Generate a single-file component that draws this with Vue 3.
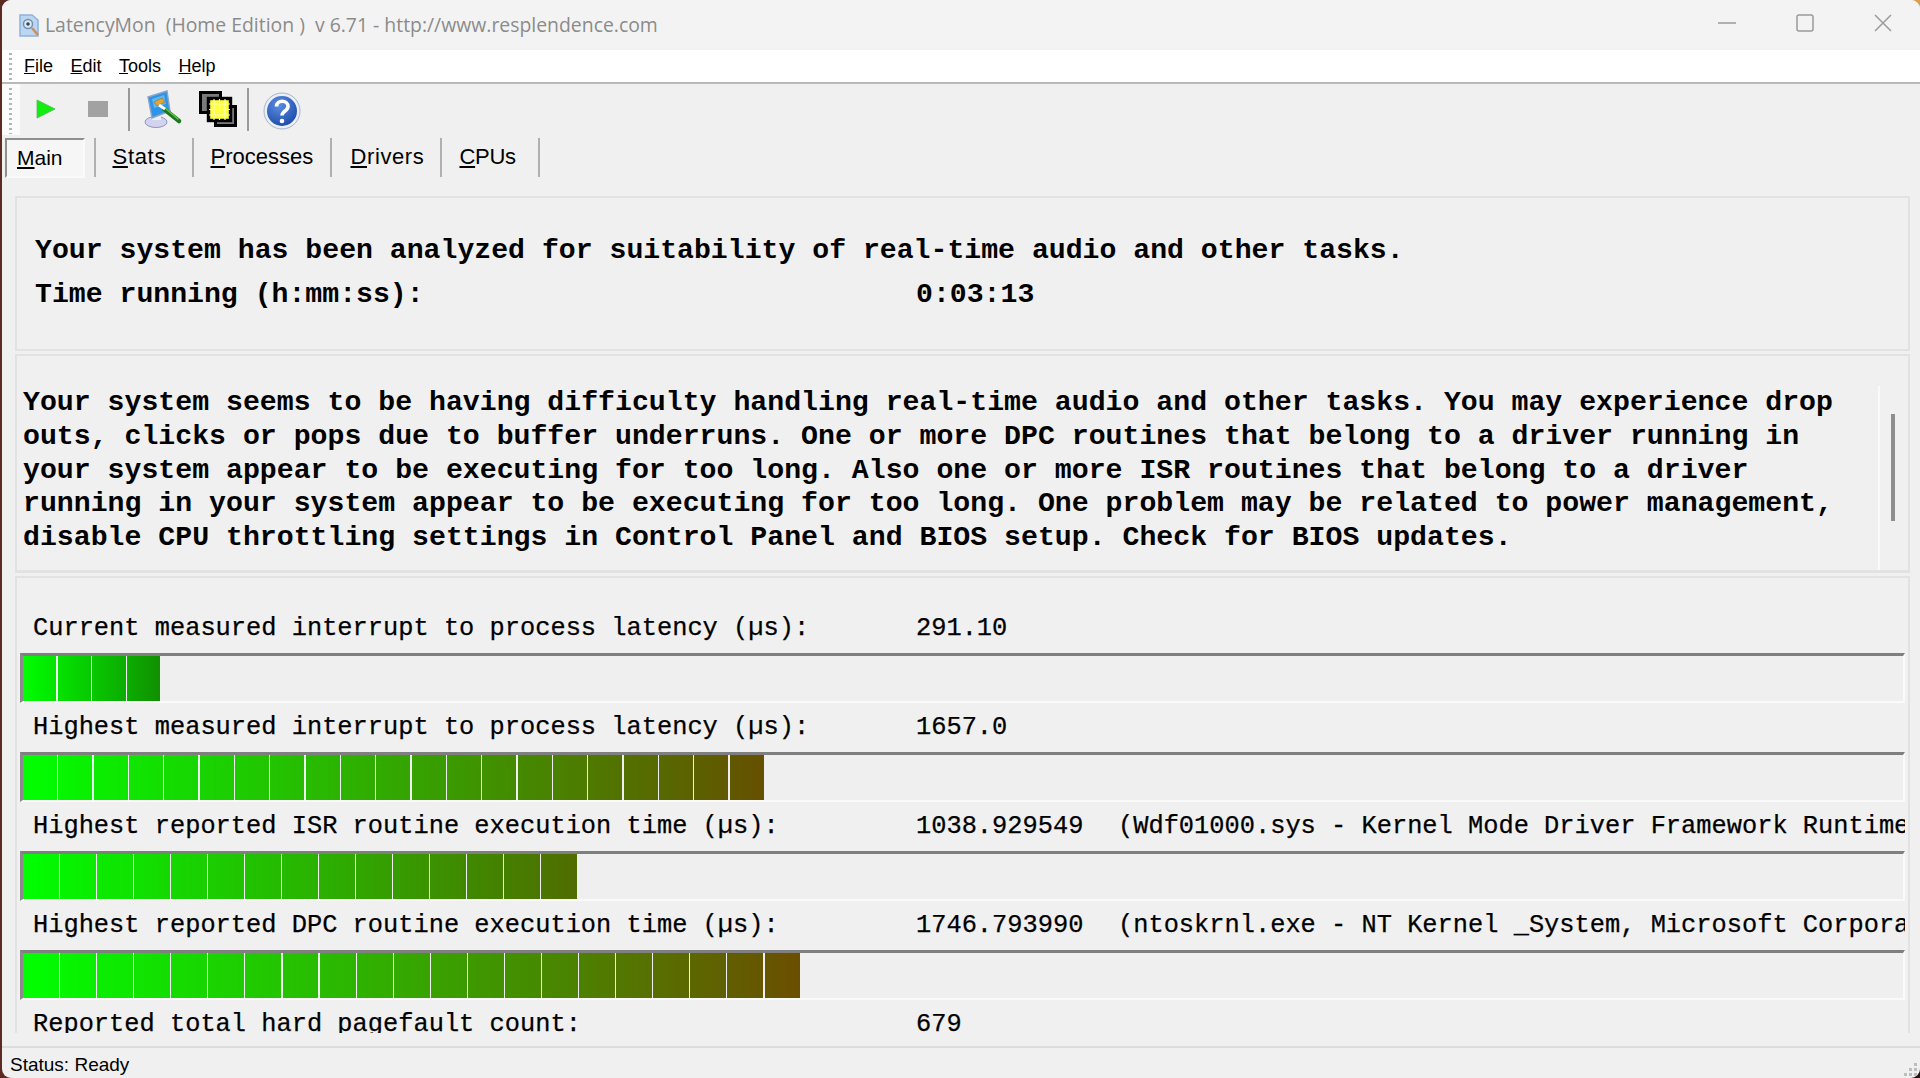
<script setup>
const menus = [['F', 'ile'], ['E', 'dit'], ['T', 'ools'], ['H', 'elp']]
const tabs = [
  { key: 'main', u: 'M', rest: 'ain' },
  { key: 'stats', u: 'S', rest: 'tats' },
  { key: 'processes', u: 'P', rest: 'rocesses' },
  { key: 'drivers', u: 'D', rest: 'rivers' },
  { key: 'cpus', u: 'C', rest: 'PUs' }
]
const advice = [
  'Your system seems to be having difficulty handling real-time audio and other tasks. You may experience drop',
  'outs, clicks or pops due to buffer underruns. One or more DPC routines that belong to a driver running in',
  'your system appear to be executing for too long. Also one or more ISR routines that belong to a driver',
  'running in your system appear to be executing for too long. One problem may be related to power management,',
  'disable CPU throttling settings in Control Panel and BIOS setup. Check for BIOS updates.'
]
function segments(count, pitch, end) {
  const out = []
  for (let i = 0; i < count; i++) {
    const mix = t => `rgb(${Math.round(end[0] * t)},${Math.round(255 + (end[1] - 255) * t)},0)`
    out.push({
      width: pitch - 1.2 + 'px',
      background: `linear-gradient(to right, ${mix(i / count)}, ${mix((i + 1) / count)})`
    })
  }
  return out
}
const rows = [
  { label: 'Current measured interrupt to process latency (µs):', value: '291.10', detail: '', segs: segments(4, 34.6, [16, 144]) },
  { label: 'Highest measured interrupt to process latency (µs):', value: '1657.0', detail: '', segs: segments(21, 35.35, [102, 80]) },
  { label: 'Highest reported ISR routine execution time (µs):', value: '1038.929549', detail: '(Wdf01000.sys - Kernel Mode Driver Framework Runtime', segs: segments(15, 37, [80, 108]) },
  { label: 'Highest reported DPC routine execution time (µs):', value: '1746.793990', detail: '(ntoskrnl.exe - NT Kernel _System, Microsoft Corpora', segs: segments(21, 37.1, [107, 78]) },
  { label: 'Reported total hard pagefault count:', value: '679', detail: '', segs: null }
]
</script>

<template>
  <div class="window">
    <header class="titlebar">
      <svg class="app-icon" viewBox="0 0 24 26" width="24" height="26">
        <path d="M3 3h12l6 5v16H3z" fill="#bcd6f2" stroke="#8fb2da" stroke-width="1.5" />
        <circle cx="11" cy="12" r="4.5" fill="#dfeaf6" stroke="#6f8fb0" stroke-width="1.5" />
        <circle cx="11" cy="12" r="1.8" fill="#33475c" />
        <path d="M15 16l6 7" stroke="#c98f62" stroke-width="2.6" />
      </svg>
      <span class="title-text">LatencyMon&nbsp; (Home Edition )&nbsp; v 6.71 - http://www.resplendence.com</span>
      <div class="win-controls">
        <svg class="wc wc-min" viewBox="0 0 18 18" width="18" height="18"><path d="M0 9h18" stroke="#9a9a9a" stroke-width="1.5" /></svg>
        <svg class="wc wc-max" viewBox="0 0 18 18" width="18" height="18"><rect x="1" y="1" width="16" height="16" rx="2" fill="none" stroke="#9a9a9a" stroke-width="1.5" /></svg>
        <svg class="wc wc-close" viewBox="0 0 18 18" width="18" height="18"><path d="M1 1l16 16M17 1L1 17" stroke="#9a9a9a" stroke-width="1.5" /></svg>
      </div>
    </header>

    <nav class="menubar">
      <span class="grip"></span>
      <span v-for="m in menus" :key="m[0]" class="menu-item"><u>{{ m[0] }}</u>{{ m[1] }}</span>
    </nav>

    <div class="toolbar">
      <span class="grip grip-tool"></span>
      <svg class="tb-play" viewBox="0 0 20 20" width="20" height="20"><path d="M1 1l18 9-18 9z" fill="#10ef10" stroke="#5fae5f" stroke-width=".8" /></svg>
      <span class="tb-stop"></span>
      <span class="tb-sep first"></span>
      <svg class="tb-tool" viewBox="0 0 40 38" width="40" height="38">
        <ellipse cx="13" cy="32" rx="11" ry="5.500" fill="#d2d3ee" stroke="#9395bd" />
        <path d="M9 24h9v6H9z" fill="#eeeef8" />
        <path d="M5 7L24 1l3 20-18 7z" fill="#2f93e8" stroke="#8aa5c9" stroke-width="1.4" />
        <path d="M9 9l12-4 2 9-12 4z" fill="#59baf5" />
        <path d="M11 12l8-4 3 4-8 4z" fill="#e3a53a" stroke="#9c7324" stroke-width=".7" />
        <path d="M21 19l15 12" stroke="#19791c" stroke-width="4.500" stroke-linecap="round" />
        <path d="M22 18l13 11" stroke="#6fc04a" stroke-width="1.400" stroke-linecap="round" />
        <path d="M16 15l6 4" stroke="#fff" stroke-width="3" />
      </svg>
      <svg class="tb-win" viewBox="0 0 38 36" width="38" height="36">
        <rect x="1.500" y="1.500" width="20" height="20" fill="#7a7a7a" stroke="#000" stroke-width="3" />
        <rect x="16.500" y="15.500" width="20" height="19" fill="#7a7a7a" stroke="#000" stroke-width="3" />
        <rect x="9.500" y="7.500" width="22" height="22" fill="#ffff3a" stroke="#000" stroke-width="3.400" />
        <path d="M15 8v21M20.500 8v21M26 8v21M10 13h21M10 18.500h21M10 24h21" stroke="#fdfdc0" stroke-width="1.200" />
      </svg>
      <span class="tb-sep second"></span>
      <svg class="tb-help" viewBox="0 0 38 38" width="38" height="38">
        <defs>
          <radialGradient id="helpFill" cx="40%" cy="30%" r="75%">
            <stop offset="0" stop-color="#5f8fe0" />
            <stop offset="1" stop-color="#1a4aa8" />
          </radialGradient>
        </defs>
        <circle cx="19" cy="19" r="18" fill="#e9eef8" stroke="#a9b4c9" />
        <circle cx="19" cy="19" r="15" fill="url(#helpFill)" />
        <path d="M13.500 14.500c0-7 11.500-7 11.500 0 0 4.500-6 4.500-6 9" fill="none" stroke="#fff" stroke-width="3.600" />
        <circle cx="19" cy="29" r="2.300" fill="#fff" />
      </svg>
    </div>

    <div class="tabs">
      <span v-for="t in tabs" :key="t.key" class="tab" :class="'tab-' + t.key"><span class="tab-face"><u>{{ t.u }}</u>{{ t.rest }}</span></span>
    </div>

    <main class="content">
      <section class="panel panel-head">
        <div class="head-line">Your system has been analyzed for suitability of real-time audio and other tasks.</div>
        <div class="head-line time-line"><span class="time-label">Time running (h:mm:ss):</span><span>0:03:13</span></div>
      </section>

      <section class="panel panel-advice">
        <div class="advice-text">
          <div v-for="line in advice" :key="line" class="advice-line">{{ line }}</div>
        </div>
        <div class="advice-scroll"><span class="thumb"></span></div>
      </section>

      <section class="panel panel-stats">
        <div v-for="r in rows" :key="r.label" class="stat">
          <div class="stat-line">
            <span class="stat-label">{{ r.label }}</span>
            <span class="stat-value">{{ r.value }}</span>
            <span v-if="r.detail" class="stat-detail">{{ r.detail }}</span>
          </div>
          <div v-if="r.segs" class="bar">
            <span v-for="(s, i) in r.segs" :key="i" class="seg" :style="s"></span>
          </div>
        </div>
      </section>
    </main>

    <footer class="statusbar">
      <span>Status: Ready</span>
      <svg class="resize" viewBox="0 0 16 16" width="16" height="16">
        <path d="M11 2h3v3h-3zM6 7h3v3H6zM11 7h3v3h-3zM1 12h3v3H1zM6 12h3v3H6zM11 12h3v3h-3z" fill="#bdbdbd" />
      </svg>
    </footer>
  </div>
</template>

<style scoped>
.window {
  margin-left: 2px;
  width: 1918px;
  height: 1078px;
  display: flex;
  flex-direction: column;
  overflow: hidden;
  border-radius: 9px;
  background: #f0f0f0;
  font-family: "Liberation Sans", Arial, sans-serif;
  color: #000;
}
.titlebar {
  height: 50px;
  flex: none;
  background: #f3f3f3;
  display: flex;
  align-items: center;
  padding-left: 15px;
}
.app-icon { flex: none; }
.title-text {
  margin-left: 4px;
  margin-bottom: 2px;
  font-family: "Open Sans", sans-serif;
  font-size: 19.400px;
  color: #8b8b8b;
  white-space: nowrap;
}
.win-controls {
  margin-left: auto;
  display: flex;
  align-items: center;
  padding-right: 28px;
  padding-bottom: 4px;
}
.wc-max { margin-left: 60px; }
.wc-close { margin-left: 60px; }
.menubar {
  height: 31px;
  flex: none;
  background: #fff;
  border-bottom: 2px solid #b9b9b9;
  display: flex;
  align-items: center;
  position: relative;
  font-size: 18px;
  padding-left: 22px;
  padding-top: 1px;
}
.grip {
  position: absolute;
  left: 7px;
  top: 3px;
  bottom: 2px;
  width: 3px;
  background: repeating-linear-gradient(to bottom, #b5b5b5 0 2px, transparent 2px 5px);
}
.menu-item { margin-right: 17.500px; }
.toolbar {
  height: 50px;
  flex: none;
  display: flex;
  align-items: center;
  position: relative;
  padding-left: 34px;
  padding-bottom: 1px;
}
.toolbar::before {
  content: "";
  position: absolute;
  left: 0;
  top: 0;
  bottom: 0;
  width: 18px;
  background: #fbfbfb;
}
.grip-tool { z-index: 1; top: 4px; bottom: 1px; }
.tb-play { flex: none; }
.tb-stop {
  width: 20px;
  height: 16px;
  margin-left: 32px;
  background: #a2a2a2;
}
.tb-sep {
  width: 2px;
  height: 43px;
  background: #9a9a9a;
}
.tb-sep.first { margin-left: 20px; }
.tb-tool { margin-left: 13px; flex: none; }
.tb-win { margin-left: 16px; flex: none; }
.tb-sep.second { margin-left: 10px; }
.tb-help { margin-left: 14px; margin-top: 3px; flex: none; }
.tabs {
  height: 43px;
  flex: none;
  display: flex;
  align-items: stretch;
  padding-left: 3px;
  font-size: 22px;
}
.tab {
  display: flex;
  align-items: center;
  border-right: 2px solid #b0b0b0;
  margin-top: 3px;
  margin-bottom: 1px;
  line-height: 34px;
  padding-bottom: 2px;
}
.tab-face { padding-left: 17px; }
.tab-main { width: 88.500px; padding-bottom: 0; }
.tab-main .tab-face {
  width: 80px;
  height: 40px;
  box-sizing: border-box;
  padding-left: 10px;
  padding-top: 2px;
  line-height: 32px;
  font-size: 21px;
  border-style: solid;
  border-width: 2px;
  border-color: #8e8e8e #fafafa #fafafa #8e8e8e;
  background: #f6f6f6;
}
.tab-stats { width: 96px; }
.tab-stats .tab-face { letter-spacing: 0.7px; }
.tab-processes { width: 136px; }
.tab-drivers { width: 108px; }
.tab-drivers .tab-face { padding-left: 19px; letter-spacing: 0.6px; }
.tab-cpus { width: 96px; }
.tab-cpus .tab-face { padding-left: 18px; letter-spacing: -0.3px; }
.content {
  flex: 1;
  min-height: 0;
  display: flex;
  flex-direction: column;
  gap: 2px;
  padding: 18px 10px 0 13px;
  font-family: "Liberation Mono", "Courier New", monospace;
}
.panel {
  box-sizing: border-box;
  border: 2px solid #e2e2e2;
  flex: none;
  overflow: hidden;
}
.panel-head {
  height: 155px;
  padding: 31px 0 0 18px;
  font-size: 28.160px;
  font-weight: 700;
  white-space: pre;
}
.head-line {
  height: 44px;
  line-height: 44px;
}
.time-label { display: inline-block; width: 881px; }
.panel-advice {
  height: 219px;
  display: flex;
  padding: 30px 0 0 6px;
  margin-top: 1px;
  border-bottom-width: 3px;
}
.advice-text {
  flex: 1;
  font-size: 28.190px;
  font-weight: 700;
  line-height: 33.800px;
  white-space: pre;
}
.advice-scroll {
  flex: none;
  width: 28px;
  height: 187px;
  border-left: 2px solid #fafafa;
  position: relative;
}
.thumb {
  position: absolute;
  left: 11px;
  top: 28px;
  width: 4px;
  height: 107px;
  background: #8e8e8e;
}
.panel-stats {
  height: 457px;
  border-bottom: 0;
  margin-top: 1px;
  padding: 27px 3px 0 3px;
  font-size: 25.360px;
  -webkit-text-stroke: 0.25px #000;
}
.stat {
  height: 99px;
}
.stat-line {
  height: 48px;
  line-height: 47px;
  display: flex;
  white-space: pre;
  overflow: hidden;
  padding-left: 13px;
}
.stat-label { width: 883px; flex: none; }
.stat-value { width: 202px; flex: none; }
.stat-detail { flex: none; }
.bar {
  box-sizing: border-box;
  height: 50px;
  display: flex;
  gap: 1.200px;
  border-style: solid;
  border-width: 3px 2px 2px 3px;
  border-color: #7f7f7f #fafafa #fafafa #8a8a8a;
  background: #efefef;
}
.seg { display: block; flex: none; height: 100%; }
.statusbar {
  height: 32px;
  flex: none;
  box-sizing: border-box;
  border-top: 2px solid #dcdcdc;
  display: flex;
  align-items: center;
  justify-content: space-between;
  padding: 3px 0 0 8px;
  font-size: 19px;
  position: relative;
}
.resize { position: absolute; right: 1px; bottom: 1px; }
</style>

<style>
html, body {
  margin: 0;
  height: 100%;
  overflow: hidden;
}
body {
  background:
    linear-gradient(to right, #5d2a22 0 12px, transparent 12px),
    linear-gradient(to bottom, #d9a050 0 40px, #241311 40px);
}
</style>
